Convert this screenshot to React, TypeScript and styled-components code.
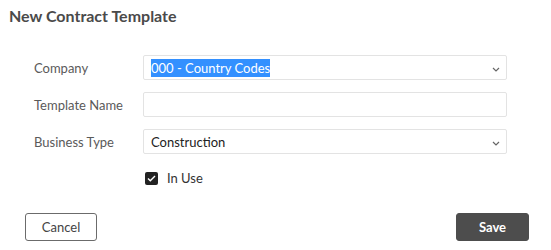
import React from "react";
import styled, { createGlobalStyle } from "styled-components";

const GlobalStyle = createGlobalStyle`
  html, body {
    margin: 0;
    padding: 0;
    background: #fff;
    font-family: Lato, "Open Sans", "Liberation Sans", sans-serif;
  }
`;

const Dialog = styled.div`
  width: 551px;
  height: 250px;
  box-sizing: border-box;
  padding: 6px 22px 0 0;
  display: flex;
  flex-direction: column;
`;

const Title = styled.h2`
  margin: 0 0 0 9px;
  font-size: 16px;
  line-height: 20px;
  font-weight: 700;
  color: #4a4a4a;
`;

const Form = styled.div`
  display: flex;
  flex-direction: column;
  gap: 12px;
  padding: 29px 0 0 34px;
`;

const Row = styled.div`
  display: flex;
  align-items: center;
`;

const Label = styled.label`
  width: 109px;
  font-size: 13px;
  color: #5a5a5a;
`;

const Field = styled.div`
  width: 364px;
  height: 25px;
  box-sizing: border-box;
  border: 1px solid #e3e3e3;
  border-radius: 2px;
  background: #fff;
  display: flex;
  align-items: center;
  padding: 0 6px 0 7px;
  font-size: 13px;
  color: #222;
`;

const Value = styled.span<{ $selected?: boolean }>`
  flex: 1;
  span {
    background: ${(p) => (p.$selected ? "#3390ff" : "transparent")};
    color: ${(p) => (p.$selected ? "#fff" : "#222")};
    padding: 1px 0;
  }
`;

const Chevron = styled.svg`
  width: 8px;
  height: 5px;
  margin-top: 3px;
`;

const CheckRow = styled.div`
  display: flex;
  align-items: center;
  gap: 9px;
  margin: 4px 0 0 111px;
  font-size: 13px;
  color: #333;
`;

const Box = styled.span`
  width: 13px;
  height: 13px;
  border-radius: 2px;
  background: #222;
  display: flex;
  align-items: center;
  justify-content: center;
`;

const Footer = styled.div`
  display: flex;
  justify-content: space-between;
  padding-left: 25px;
  margin-top: 27px;
`;

const Button = styled.button<{ $primary?: boolean }>`
  width: ${(p) => (p.$primary ? "73px" : "72px")};
  height: 28px;
  box-sizing: border-box;
  border-radius: 3px;
  font-family: Lato, "Liberation Sans", sans-serif;
  font-size: 13px;
  font-weight: ${(p) => (p.$primary ? 700 : 400)};
  color: ${(p) => (p.$primary ? "#fff" : "#444")};
  background: ${(p) => (p.$primary ? "#4d4d4d" : "#fff")};
  border: 1px solid ${(p) => (p.$primary ? "#4d4d4d" : "#6b6b6b")};
  cursor: pointer;
`;

const Caret = () => (
  <Chevron viewBox="0 0 8 5">
    <path d="M1 1l3 3 3-3" fill="none" stroke="#666" strokeWidth="1.2" />
  </Chevron>
);

export default function App() {
  return (
    <Dialog>
      <GlobalStyle />
      <Title>New Contract Template</Title>
      <Form>
        <Row>
          <Label>Company</Label>
          <Field>
            <Value $selected>
              <span>000 - Country Codes</span>
            </Value>
            <Caret />
          </Field>
        </Row>
        <Row>
          <Label>Template Name</Label>
          <Field />
        </Row>
        <Row>
          <Label>Business Type</Label>
          <Field>
            <Value>
              <span>Construction</span>
            </Value>
            <Caret />
          </Field>
        </Row>
        <CheckRow>
          <Box>
            <svg width="9" height="7" viewBox="0 0 9 7">
              <path d="M1 3.5l2.3 2.3L8 1" fill="none" stroke="#fff" strokeWidth="1.4" />
            </svg>
          </Box>
          In Use
        </CheckRow>
      </Form>
      <Footer>
        <Button>Cancel</Button>
        <Button $primary>Save</Button>
      </Footer>
    </Dialog>
  );
}
